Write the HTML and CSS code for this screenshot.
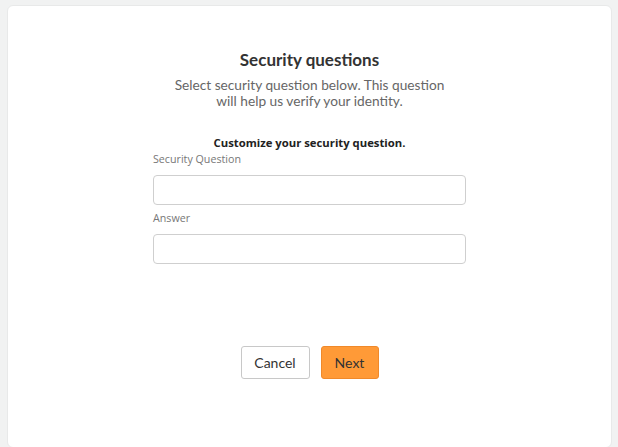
FILE: index.html
```html
<!DOCTYPE html>
<html>
<head>
<meta charset="utf-8">
<link rel="stylesheet" href="styles.css">
</head>
<body>
<div class="card">
  <h1 class="title">Security questions</h1>
  <p class="desc">Select security question below. This question<br>will help us verify your identity.</p>
  <form class="form">
    <div class="subhead">Customize your security question.</div>
    <label class="label">Security Question</label>
    <input class="field" type="text">
    <label class="label">Answer</label>
    <input class="field" type="text">
  </form>
  <div class="actions">
    <button class="btn btn-cancel" type="button">Cancel</button>
    <button class="btn btn-next" type="button">Next</button>
  </div>
</div>
</body>
</html>
```

FILE: styles.css
```css
html, body {
  margin: 0;
  height: 100%;
}
body {
  background: #f1f2f2;
  padding: 5px 6px 0 7px;
  box-sizing: border-box;
  overflow: hidden;
}
.card {
  background: #fff;
  border: 1px solid #e8e9e9;
  border-radius: 6px;
  height: 443px;
  box-sizing: border-box;
  display: flex;
  flex-direction: column;
  align-items: center;
  padding-top: 42px;
}
.title {
  margin: 0;
  font-family: Lato, "Liberation Sans", sans-serif;
  font-weight: 700;
  font-size: 17px;
  line-height: 24px;
  color: #333;
}
.desc {
  margin: 5px 0 0;
  font-family: Lato, "Liberation Sans", sans-serif;
  font-size: 13.7px;
  line-height: 16px;
  color: #666;
  text-align: center;
}
.form {
  width: 313px;
  margin-top: 26px;
  display: flex;
  flex-direction: column;
}
.subhead {
  font-family: "Open Sans", "Liberation Sans", sans-serif;
  font-weight: 700;
  font-size: 11.3px;
  line-height: 16px;
  color: #222;
  text-align: center;
}
.label {
  font-family: "Open Sans", "Liberation Sans", sans-serif;
  font-size: 10.7px;
  line-height: 16px;
  color: #777;
  margin-bottom: 8px;
}
.field {
  height: 30px;
  box-sizing: border-box;
  border: 1px solid #cfcfcf;
  border-radius: 4px;
  margin: 0 0 5px;
  padding: 0 8px;
  background: #fff;
}
.actions {
  display: flex;
  gap: 11px;
  margin-top: 77px;
}
.btn {
  font-family: Lato, "Liberation Sans", sans-serif;
  font-size: 14px;
  height: 33px;
  border-radius: 3px;
  color: #333;
  padding: 0;
  cursor: pointer;
}
.btn-cancel {
  width: 69px;
  background: #fff;
  border: 1px solid #c8c8c8;
}
.btn-next {
  width: 58px;
  background: #ff9a37;
  border: 1px solid #f0892a;
}
```
